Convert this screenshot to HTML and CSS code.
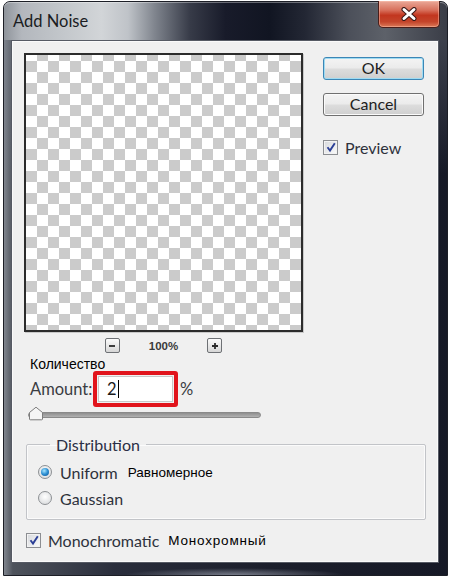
FILE: index.html
```html
<!DOCTYPE html>
<html lang="en">
<head>
<meta charset="UTF-8">
<title>Add Noise</title>
<link rel="stylesheet" href="styles.css">
</head>
<body>
<div class="window">
  <div class="titlebar">
    <span class="title">Add Noise</span>
    <div class="close-btn">
      <svg width="18" height="14" viewBox="0 0 18 14">
        <path d="M4 2.5 L14 11.5 M14 2.5 L4 11.5" stroke="#3a1a18" stroke-width="5" stroke-linecap="round"/>
        <path d="M4 2.5 L14 11.5 M14 2.5 L4 11.5" stroke="#ffffff" stroke-width="3" stroke-linecap="round"/>
      </svg>
    </div>
  </div>

  <div class="client">
    <div class="top-row">
      <div class="preview-col">
        <div class="preview"></div>
        <div class="zoom-row">
          <span class="zoom-btn">
            <svg width="12" height="12" viewBox="0 0 12 12"><path d="M3 6 H9" stroke="#2a2a2a" stroke-width="1.8"/></svg>
          </span>
          <span class="zoom-value">100%</span>
          <span class="zoom-btn">
            <svg width="12" height="12" viewBox="0 0 12 12"><path d="M3 6 H9 M6 3 V9" stroke="#2a2a2a" stroke-width="1.8"/></svg>
          </span>
        </div>
      </div>
      <div class="buttons">
        <div class="btn btn-default">OK</div>
        <div class="btn">Cancel</div>
        <div class="option preview-check">
          <span class="checkbox">
            <svg width="12" height="12" viewBox="0 0 12 12"><path d="M2.5 6.2 L5 9.5 L9.8 2.2" fill="none" stroke="#2b3f96" stroke-width="1.9"/></svg>
          </span>
          <span>Preview</span>
        </div>
      </div>
    </div>

    <div class="note note-amount">Количество</div>

    <div class="amount-row">
      <span class="label amount-label">Amount:</span>
      <span class="highlight">
        <span class="input">2<span class="caret"></span></span>
      </span>
      <span class="label percent">%</span>
    </div>

    <div class="slider">
      <div class="track"></div>
      <svg class="thumb" width="16" height="15" viewBox="0 0 16 15">
        <path d="M1.5 13 V6.5 L8 1.2 L14.5 6.5 V13 Q14.5 13.8 13.7 13.8 H2.3 Q1.5 13.8 1.5 13 Z" fill="#f6f6f6" stroke="#7d7d7d" stroke-width="1"/>
      </svg>
    </div>

    <fieldset class="group">
      <legend>Distribution</legend>
      <div class="option">
        <span class="radio on"></span>
        <span>Uniform</span>
        <span class="note">Равномерное</span>
      </div>
      <div class="option">
        <span class="radio"></span>
        <span>Gaussian</span>
      </div>
    </fieldset>

    <div class="option mono">
      <span class="checkbox">
        <svg width="12" height="12" viewBox="0 0 12 12"><path d="M2.5 6.2 L5 9.5 L9.8 2.2" fill="none" stroke="#2b3f96" stroke-width="1.9"/></svg>
      </span>
      <span>Monochromatic</span>
      <span class="note">Монохромный</span>
    </div>
  </div>
</div>
</body>
</html>
```

FILE: styles.css
```css
* {
	box-sizing: border-box;
}

body {
	margin: 0;
	background: #ffffff;
	font-family: Lato, "Open Sans", sans-serif;
	color: #2e323c;
}

.window {
	width: 445px;
	height: 575px;
	margin: 1px 0 0 3px;
	border: 1px solid #1c1e26;
	border-radius: 7px 7px 0 0;
	padding: 0 8px 12px 7px;
	display: flex;
	flex-direction: column;
	background:
		radial-gradient(ellipse 110px 7px at 52% 100%, rgba(190, 196, 210, 0.55), rgba(190, 196, 210, 0) 100%),
		linear-gradient(180deg, rgba(120, 126, 136, 0.5) 0, rgba(40, 44, 56, 0) 30%),
		linear-gradient(90deg, #80858e 0, #4e535c 2%, #2a2e3c 25%, #1c1f2c 60%, #161926 100%);
}

.titlebar {
	height: 38px;
	margin: 0 -8px 0 -7px;
	padding: 0 7px 0 9px;
	display: flex;
	justify-content: space-between;
	align-items: flex-start;
	border-radius: 6px 6px 0 0;
	box-shadow: inset 0 1px 0 rgba(255, 255, 255, 0.35);
	background: linear-gradient(90deg, #8f949b 0, #b3b7bd 4%, #c4c8cc 14%, #d2d5d8 22%, #bfc3c8 28%, #80858e 34%, #373b48 42%, #181b2a 50%, #111522 60%, #232734 68%, #4c505a 78%, #5d6169 86%, #3a3d47 100%);
}

.title {
	margin-top: 9px;
	font-size: 16.5px;
	color: #1a1c22;
}

.close-btn {
	width: 62px;
	height: 27px;
	margin-top: -1px;
	display: flex;
	align-items: center;
	justify-content: center;
	border: 1px solid #4a1e1a;
	border-top: none;
	border-radius: 0 0 5px 5px;
	background: linear-gradient(180deg, #eaa898 0, #d8705c 35%, #c2361f 55%, #c4452b 80%, #dc7a58 100%);
	box-shadow: inset 0 0 0 1px rgba(255, 200, 180, 0.45);
}

.client {
	flex: 1;
	background: #f0f0f0;
	border: 1px solid #565a64;
	box-shadow: inset 0 0 0 1px #fafafa;
	padding: 12px 0 0 12px;
	display: flex;
	flex-direction: column;
	align-items: flex-start;
}

.top-row {
	display: flex;
	align-items: flex-start;
}

.preview-col {
	width: 279px;
	display: flex;
	flex-direction: column;
	align-items: center;
}

.preview {
	width: 279px;
	height: 279px;
	border: 2px solid #2c2c2c;
	box-shadow: 1px 1px 0 #c9c9c9;
	background-color: #ffffff;
	background-image:
		linear-gradient(45deg, #cbcbcb 25%, transparent 25%, transparent 75%, #cbcbcb 75%),
		linear-gradient(45deg, #cbcbcb 25%, transparent 25%, transparent 75%, #cbcbcb 75%);
	background-size: 22px 22px;
	background-position: 0 -5px, 11px 6px;
}

.zoom-row {
	margin-top: 6px;
	display: flex;
	align-items: center;
	gap: 29px;
}

.zoom-btn {
	width: 15px;
	height: 15px;
	border: 1px solid #6e7175;
	border-radius: 2px;
	background: linear-gradient(180deg, #fbfbfb, #d6d6d6);
	display: flex;
	align-items: center;
	justify-content: center;
}

.zoom-value {
	font-family: "Liberation Sans", Arial, sans-serif;
	font-size: 11.5px;
	font-weight: bold;
	color: #3a3a3a;
}

.buttons {
	margin: 4px 0 0 20px;
	display: flex;
	flex-direction: column;
}

.btn {
	width: 101px;
	height: 23px;
	margin-bottom: 13px;
	border: 1px solid #707070;
	border-radius: 3px;
	background: linear-gradient(180deg, #f4f4f4 0, #ebebeb 48%, #dddddd 52%, #cfcfcf 100%);
	box-shadow: inset 0 0 0 1px #fbfbfb;
	font-size: 16px;
	line-height: 20px;
	text-align: center;
	color: #1e1e22;
}

.btn-default {
	border-color: #3b86b6;
	box-shadow: inset 0 0 0 1px #9fdbf2;
}

.option {
	display: flex;
	align-items: center;
	height: 26px;
	font-size: 16px;
	color: #2e323c;
}

.preview-check {
	margin-top: 5px;
	gap: 7px;
}

.checkbox {
	width: 15px;
	height: 15px;
	border: 1px solid #8c8e92;
	background: linear-gradient(135deg, #d6d8dc, #fbfbfb);
	box-shadow: inset 0 0 0 1px #f2f2f2;
	display: flex;
	align-items: center;
	justify-content: center;
}

.note {
	font-family: "Liberation Sans", Arial, sans-serif;
	font-size: 13.5px;
	color: #000000;
}

.note-amount {
	margin: 3px 0 0 6px;
	line-height: 16px;
	font-size: 14px;
}

.amount-row {
	margin: -1px 0 0 6px;
	height: 36px;
	display: flex;
	align-items: center;
}

.label {
	font-size: 16.5px;
	color: #3a3c42;
}

.amount-label {
	width: 63px;
}

.highlight {
	width: 85px;
	height: 36px;
	border: 4px solid #e1141c;
	border-radius: 3px;
	padding: 1px;
	display: flex;
}

.input {
	flex: 1;
	background: #ffffff;
	border: 1px solid #c8c8c8;
	padding-left: 8px;
	font-size: 16.5px;
	line-height: 24px;
	color: #1a1a1a;
	display: flex;
	align-items: center;
}

.caret {
	width: 1px;
	height: 18px;
	margin-left: 1px;
	background: #000000;
}

.percent {
	margin-left: 2px;
}

.slider {
	position: relative;
	margin: -2px 0 0 4px;
	width: 233px;
	height: 16px;
}

.track {
	margin-top: 7px;
	height: 6px;
	border-radius: 3px;
	background: linear-gradient(180deg, #8f8f8f, #b2b2b2);
	border: 1px solid #8a8a8a;
}

.thumb {
	position: absolute;
	left: 0;
	top: 1px;
}

.group {
	margin: 14px 0 0 2px;
	width: 400px;
	padding: 5px 0 8px 11px;
	border: 1px solid #c2c4c8;
	border-radius: 2px;
	box-shadow: inset 0 0 0 1px #fbfbfb;
}

.group legend {
	margin-left: 12px;
	padding: 0 6px;
	font-size: 16px;
	line-height: 19px;
	color: #2a2f45;
}

.group .option {
	gap: 8px;
}

.group .note {
	margin-left: 2px;
}

.radio {
	width: 14px;
	height: 14px;
	border-radius: 50%;
	border: 1px solid #8d9094;
	background: radial-gradient(circle at 50% 40%, #ffffff, #d4d6d8);
	display: flex;
	align-items: center;
	justify-content: center;
}

.radio.on::after {
	content: "";
	width: 8px;
	height: 8px;
	border-radius: 50%;
	background: radial-gradient(circle at 40% 35%, #a8e6ff 0, #2c8ed2 50%, #0d4f8c 100%);
}

.mono {
	margin-top: 7px;
	margin-left: 2px;
	gap: 7px;
}

.mono .note {
	margin-left: 2px;
	letter-spacing: 0.8px;
}
```
